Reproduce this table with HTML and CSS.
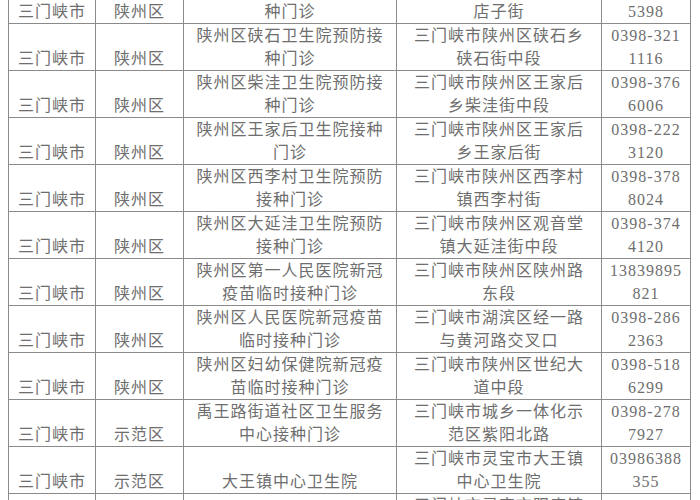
FILE: index.html
```html
<!DOCTYPE html>
<html lang="zh">
<head>
<meta charset="utf-8">
<link rel="stylesheet" href="styles.css">
</head>
<body>
<table class="sheet">
  <colgroup>
    <col class="c1"><col class="c2"><col class="c3"><col class="c4"><col class="c5">
  </colgroup>
  <tr class="first">
    <td class="bot">三门峡市</td><td class="bot">陕州区</td><td>种门诊</td><td>店子街</td><td>5398</td>
  </tr>
  <tr>
    <td class="bot">三门峡市</td><td class="bot">陕州区</td><td>陕州区硖石卫生院预防接<br>种门诊</td><td>三门峡市陕州区硖石乡<br>硖石街中段</td><td>0398-321<br>1116</td>
  </tr>
  <tr>
    <td class="bot">三门峡市</td><td class="bot">陕州区</td><td>陕州区柴洼卫生院预防接<br>种门诊</td><td>三门峡市陕州区王家后<br>乡柴洼街中段</td><td>0398-376<br>6006</td>
  </tr>
  <tr>
    <td class="bot">三门峡市</td><td class="bot">陕州区</td><td>陕州区王家后卫生院接种<br>门诊</td><td>三门峡市陕州区王家后<br>乡王家后街</td><td>0398-222<br>3120</td>
  </tr>
  <tr>
    <td class="bot">三门峡市</td><td class="bot">陕州区</td><td>陕州区西李村卫生院预防<br>接种门诊</td><td>三门峡市陕州区西李村<br>镇西李村街</td><td>0398-378<br>8024</td>
  </tr>
  <tr>
    <td class="bot">三门峡市</td><td class="bot">陕州区</td><td>陕州区大延洼卫生院预防<br>接种门诊</td><td>三门峡市陕州区观音堂<br>镇大延洼街中段</td><td>0398-374<br>4120</td>
  </tr>
  <tr>
    <td class="bot">三门峡市</td><td class="bot">陕州区</td><td>陕州区第一人民医院新冠<br>疫苗临时接种门诊</td><td>三门峡市陕州区陕州路<br>东段</td><td>13839895<br>821</td>
  </tr>
  <tr>
    <td class="bot">三门峡市</td><td class="bot">陕州区</td><td>陕州区人民医院新冠疫苗<br>临时接种门诊</td><td>三门峡市湖滨区经一路<br>与黄河路交叉口</td><td>0398-286<br>2363</td>
  </tr>
  <tr>
    <td class="bot">三门峡市</td><td class="bot">陕州区</td><td>陕州区妇幼保健院新冠疫<br>苗临时接种门诊</td><td>三门峡市陕州区世纪大<br>道中段</td><td>0398-518<br>6299</td>
  </tr>
  <tr>
    <td class="bot">三门峡市</td><td class="bot">示范区</td><td>禹王路街道社区卫生服务<br>中心接种门诊</td><td>三门峡市城乡一体化示<br>范区紫阳北路</td><td>0398-278<br>7927</td>
  </tr>
  <tr>
    <td class="bot">三门峡市</td><td class="bot">示范区</td><td class="bot">大王镇中心卫生院</td><td>三门峡市灵宝市大王镇<br>中心卫生院</td><td>03986388<br>355</td>
  </tr>
  <tr class="last">
    <td></td><td></td><td></td><td>三门峡市灵宝市阳店镇</td><td>03986866</td>
  </tr>
</table>
</body>
</html>
```
FILE: styles.css
```css
html, body {
  margin: 0;
  padding: 0;
  background: #ffffff;
  overflow: hidden;
  height: 500px;
}

.sheet {
  margin-left: 8px;
  border-collapse: collapse;
  table-layout: fixed;
  width: 682px;
  font-family: "Liberation Serif", "Noto Sans CJK SC", serif;
  font-size: 16px;
  letter-spacing: 1px;
  line-height: 23px;
  color: #6e6e6e;
}

.c1 { width: 87px; }
.c2 { width: 88px; }
.c3 { width: 213px; }
.c4 { width: 205px; }
.c5 { width: 89px; }

.sheet td {
  border: 1px solid #8a8a8a;
  padding: 0;
  height: 45.5px;
  text-align: center;
  vertical-align: middle;
  white-space: nowrap;
  overflow: hidden;
}

.sheet td.bot {
  vertical-align: bottom;
}

.sheet tr.first td {
  border-top: none;
  height: 21px;
  vertical-align: bottom;
}

.sheet tr.last td {
  height: 23px;
  vertical-align: top;
  border-bottom: none;
}
```
